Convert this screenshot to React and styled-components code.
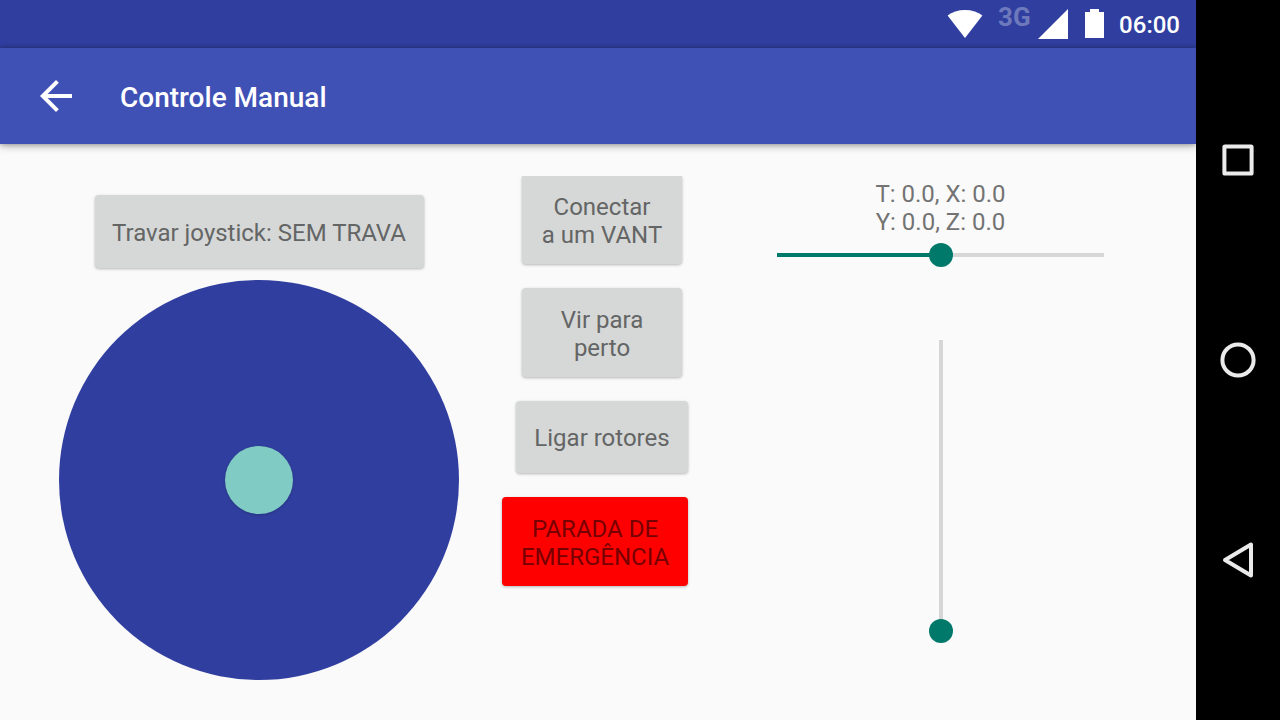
import React, { useState } from "react";
import styled, { createGlobalStyle, css } from "styled-components";

const GlobalStyle = createGlobalStyle`
  *, *::before, *::after { box-sizing: border-box; }
  body {
    margin: 0;
    background: #fafafa;
    font-family: Roboto, "Liberation Sans", sans-serif;
  }
  button { font-family: inherit; border: 0; padding: 0; cursor: pointer; }
`;

const Device = styled.div`
  display: flex;
  min-height: 100vh;
`;

const Screen = styled.div`
  flex: 1;
  min-width: 0;
  display: flex;
  flex-direction: column;
  background: #fafafa;
  overflow: hidden;
`;

const StatusBar = styled.header`
  height: 48px;
  padding-right: 16px;
  display: flex;
  align-items: center;
  justify-content: flex-end;
  background: #303f9f;
  color: #fff;
`;

const StatusIcons = styled.svg`
  display: block;
`;

const NetworkLabel = styled.span`
  align-self: flex-start;
  width: 36px;
  margin: 3px 4px 0 15px;
  font-size: 26px;
  line-height: 28px;
  font-weight: 700;
  color: #6e79bc;
`;

const Clock = styled.time`
  margin-left: 15px;
  padding-top: 2px;
  font-size: 24px;
  line-height: 28px;
  font-weight: 500;
`;

const AppBar = styled.div`
  position: relative;
  height: 96px;
  padding: 0 32px;
  display: flex;
  align-items: center;
  gap: 40px;
  background: #3f51b5;
  color: #fff;
  box-shadow: 0 0 5px rgba(0, 0, 0, 0.35), 0 3px 8px rgba(0, 0, 0, 0.2);
`;

const BackButton = styled.button`
  width: 48px;
  height: 48px;
  background: none;
  color: inherit;

  svg { display: block; }
`;

const Title = styled.h1`
  margin: 0;
  padding-top: 4px;
  font-size: 28px;
  line-height: 32px;
  font-weight: 500;
`;

const Content = styled.main`
  flex: 1;
  padding: 32px;
  display: grid;
  grid-template-columns: 454fr 231fr 447fr;
`;

const JoystickColumn = styled.section`
  display: flex;
  flex-direction: column;
  align-items: center;
  gap: 12px;
  padding-top: 19px;
`;

const ActionColumn = styled.section`
  display: flex;
  flex-direction: column;
  align-items: flex-end;
  gap: 24px;
  padding-right: 29px;
`;

const ActionGroup = styled.div`
  display: flex;
  flex-direction: column;
  align-items: center;
  gap: 24px;
`;

const SliderColumn = styled.section`
  display: flex;
  flex-direction: column;
  align-items: center;
  padding: 4px 48px 0;
`;

const RaisedButton = styled.button`
  width: ${(p) => p.$width || "auto"};
  min-height: ${(p) => p.$height || "89px"};
  padding-top: 2px;
  border-radius: 4px;
  background: #d6d8d7;
  color: #646565;
  font-size: 24px;
  line-height: 28px;
  text-align: center;
  box-shadow: 0 1px 3px rgba(0, 0, 0, 0.28);

  ${(p) => p.$flatTop && css`
    border-radius: 0 0 4px 4px;
    clip-path: inset(0 -8px -8px -8px);
  `}
  ${(p) => p.$danger && css`
    background: #f00;
    color: #770000;
  `}
`;

const JoystickPad = styled.div`
  width: 400px;
  height: 400px;
  display: flex;
  align-items: center;
  justify-content: center;
  border-radius: 50%;
  background: #303f9f;
`;

const JoystickKnob = styled.button`
  width: 68px;
  height: 68px;
  border-radius: 50%;
  background: #80cbc4;
  box-shadow: 0 1px 3px rgba(0, 0, 0, 0.2);
`;

const Readout = styled.output`
  font-size: 24px;
  line-height: 28px;
  text-align: center;
  color: #737373;
  white-space: pre-line;
`;

const Slider = styled.input`
  appearance: none;
  display: block;
  margin: 0;
  background: no-repeat center
    linear-gradient(
      ${(p) => (p.$vertical ? "to top" : "to right")},
      #00796b var(--level),
      #d6d6d6 var(--level)
    );

  ${(p) => p.$vertical
    ? css`
        width: 24px;
        height: 315px;
        margin-top: 61px;
        writing-mode: vertical-lr;
        direction: rtl;
        background-size: 4px calc(100% - 24px);
      `
    : css`
        width: 100%;
        height: 24px;
        margin-top: 7px;
        background-size: calc(100% - 24px) 4px;
      `}

  &::-webkit-slider-thumb {
    appearance: none;
    width: 24px;
    height: 24px;
    border-radius: 50%;
    background: #00796b;
  }
`;

const NavBar = styled.nav`
  width: 84px;
  padding: 60px 0;
  display: flex;
  flex-direction: column;
  background: #000;
`;

const NavButton = styled.button`
  flex: 1;
  display: flex;
  align-items: center;
  justify-content: center;
  background: none;
  color: #ebebeb;
`;

function NavIcon({ children }) {
  return (
    <svg width="40" height="40" viewBox="0 0 40 40" fill="none" stroke="currentColor" strokeWidth="4" strokeLinejoin="round">
      {children}
    </svg>
  );
}

function LevelSlider({ label, value, onChange, vertical }) {
  return (
    <Slider
      type="range"
      min="0"
      max="100"
      aria-label={label}
      value={value}
      onChange={(e) => onChange(Number(e.target.value))}
      $vertical={vertical}
      style={{ "--level": `${value}%` }}
    />
  );
}

export default function App() {
  const [rotation, setRotation] = useState(50);
  const [throttle, setThrottle] = useState(0);

  return (
    <>
      <GlobalStyle />
      <Device>
        <Screen>
          <StatusBar>
            <StatusIcons width="36" height="30" viewBox="0 0 36 30" fill="#fff" aria-label="Wi-Fi">
              <path d="M0.6 6.6C5 3 11 1 18 1s13 2 17.4 5.6L18 29z" />
            </StatusIcons>
            <NetworkLabel>3G</NetworkLabel>
            <StatusIcons width="30" height="30" viewBox="0 0 30 30" fill="#fff" aria-label="Sinal">
              <path d="M0 30 30 0v30z" />
            </StatusIcons>
            <StatusIcons width="36" height="30" viewBox="0 0 36 30" fill="#fff" aria-label="Bateria">
              <path d="M17 3h5V0h9v3h5v26H17z" />
            </StatusIcons>
            <Clock>06:00</Clock>
          </StatusBar>
          <AppBar>
            <BackButton type="button" aria-label="Voltar">
              <svg width="48" height="48" viewBox="0 0 24 24" fill="currentColor">
                <path d="M20 11H7.83l5.59-5.59L12 4l-8 8 8 8 1.41-1.41L7.83 13H20v-2z" />
              </svg>
            </BackButton>
            <Title>Controle Manual</Title>
          </AppBar>
          <Content>
            <JoystickColumn>
              <RaisedButton type="button" $width="329px" $height="73px">Travar joystick: SEM TRAVA</RaisedButton>
              <JoystickPad>
                <JoystickKnob type="button" aria-label="Joystick" />
              </JoystickPad>
            </JoystickColumn>
            <ActionColumn>
              <ActionGroup>
                <RaisedButton type="button" $flatTop $width="160px" $height="88px">Conectar<br />a um VANT</RaisedButton>
                <RaisedButton type="button" $width="160px">Vir para<br />perto</RaisedButton>
                <RaisedButton type="button" $width="172px" $height="72px">Ligar rotores</RaisedButton>
              </ActionGroup>
              <RaisedButton type="button" $danger $width="186px">PARADA DE<br />EMERGÊNCIA</RaisedButton>
            </ActionColumn>
            <SliderColumn>
              <Readout>{"T: 0.0, X: 0.0\nY: 0.0, Z: 0.0"}</Readout>
              <LevelSlider label="Rotação" value={rotation} onChange={setRotation} />
              <LevelSlider label="Aceleração" value={throttle} onChange={setThrottle} vertical />
            </SliderColumn>
          </Content>
        </Screen>
        <NavBar>
          <NavButton type="button" aria-label="Recentes">
            <NavIcon><rect x="6.4" y="6.4" width="27.2" height="27.2" rx="0.6" /></NavIcon>
          </NavButton>
          <NavButton type="button" aria-label="Início">
            <NavIcon><circle cx="20" cy="20" r="15.6" /></NavIcon>
          </NavButton>
          <NavButton type="button" aria-label="Voltar à tela anterior">
            <NavIcon><path d="M33 4.5v31L7 20z" /></NavIcon>
          </NavButton>
        </NavBar>
      </Device>
    </>
  );
}
